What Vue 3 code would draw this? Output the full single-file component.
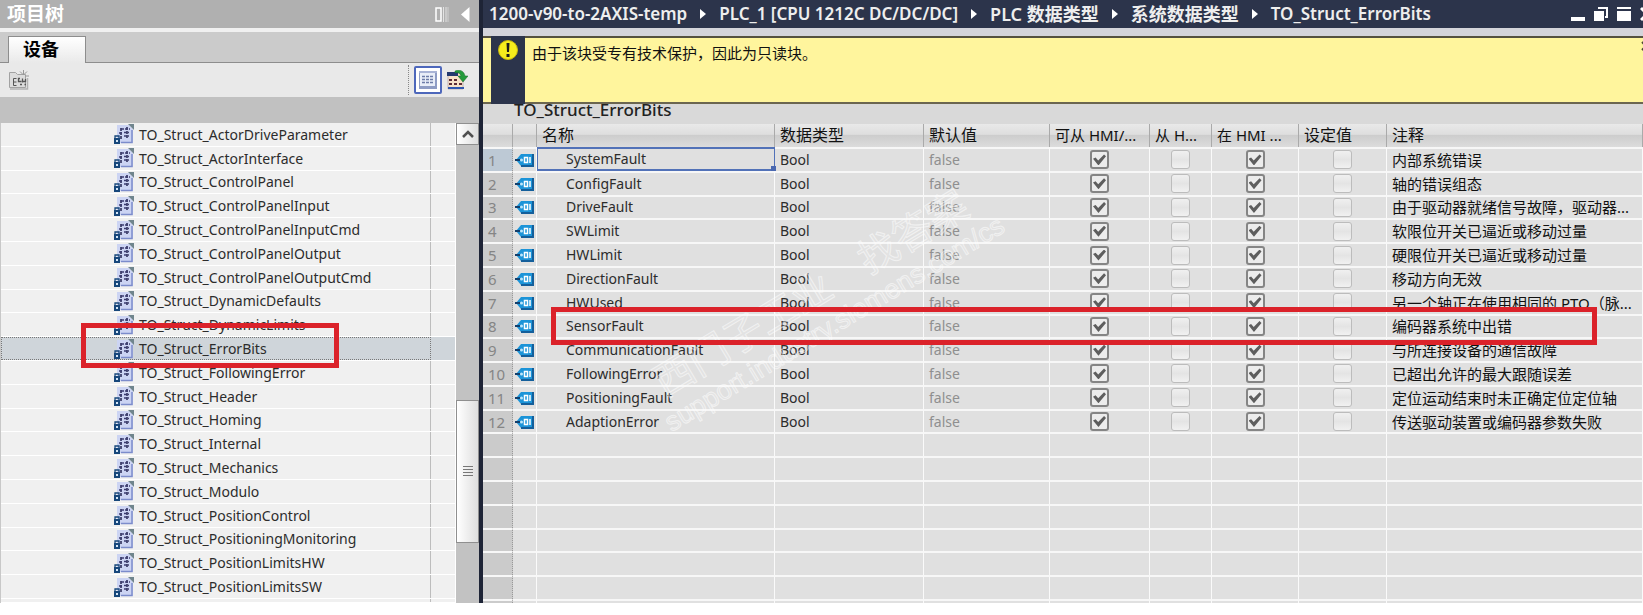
<template>
  <div class="app">
    <aside class="tree-panel">
      <header class="tree-title">
        <h2>项目树</h2>
        <button type="button" class="plain-btn" aria-label="自动折叠">
          <svg width="14" height="15" viewBox="0 0 14 15">
            <path d="M1 1h5v13h-5z" fill="none" stroke="#fff" stroke-width="1.5" />
            <path d="M8.5 0v15M11 0v15" stroke="#e4e4e4" stroke-width="1" />
            <path d="M13 0v15" stroke="#d0d0d0" stroke-width="1" />
          </svg>
        </button>
        <button type="button" class="plain-btn" aria-label="折叠">
          <svg width="9" height="15" viewBox="0 0 9 15"><path d="M8.5 0v15L0 7.5z" fill="#fff" /></svg>
        </button>
      </header>

      <div class="tabs">
        <button type="button" class="tab">设备</button>
      </div>

      <div class="toolbar">
        <button type="button" class="plain-btn" aria-label="新建">
          <svg width="21" height="20" viewBox="0 0 21 20">
            <path d="M1.5 2.5h6l2 2h8v13h-16z" fill="#dcdcdc" stroke="#a2a2a2" />
            <path d="M2 19h17.500V8" fill="none" stroke="#b2b2b2" stroke-width="1.5" />
            <path d="M8.500 8.500h-3v7h3M5.500 12h3" fill="none" stroke="#555" />
            <path d="M12 8.500h-1.500v3h3M14.500 8.500v4M12 14.500h2M17.500 9v3M15 11.500h3M16.500 14.500h1.500" fill="none" stroke="#555" stroke-width="1.300" />
            <path d="M15.500 0v5M12 1.500l3 3M19 1.500l-3 3M17 6h4" stroke="#999" />
          </svg>
        </button>
        <span class="spacer"></span>
        <span class="divider"></span>
        <button type="button" class="view-btn" aria-label="详细视图">
          <svg width="18" height="18" viewBox="0 0 18 18">
            <path d="M0 0h18v18H0z" fill="#8e9cc4" />
            <path d="M1 2h15v13H1z" fill="#e9eef8" />
            <path d="M0 0h18v2H0z" fill="#a9b4d6" />
            <path d="M3 5.5h12M3 8.5h12M3 11.5h12" stroke="#6d7ca8" stroke-width="1.5" stroke-dasharray="3 1" />
          </svg>
        </button>
        <button type="button" class="plain-btn" aria-label="打开视图">
          <svg width="21" height="20" viewBox="0 0 21 20">
            <path d="M1 3h15v16H1z" fill="#f8e2c8" stroke="#c3b3b3" />
            <path d="M0 2h11v4H0z" fill="#24396f" />
            <path d="M2 9h3v2H2zM7 9h3v2H7zM2 13h3v2H2zM7 13h3v2H7zM12 13h3v2h-3z" fill="#5c2b35" />
            <path d="M1 18h16" stroke="#2f57b0" stroke-width="2" />
            <path d="M8 1c5-2 9 0 10 5h3l-5 6-5-6h3c-1-3-3-4-6-3z" fill="#239a3b" stroke="#17692a" stroke-width=".5" />
          </svg>
        </button>
      </div>

      <div class="tree-head"></div>

      <div class="tree-body">
        <ul class="tree-list">
          <li v-for="item in treeItems" :key="item" :class="{ selected: item === selectedItem }">
            <span class="tree-cell">
              <svg class="type-icon" width="20" height="20" viewBox="0 0 20 20">
                <path d="M3 1h12l4 4v14H3z" fill="#ccd4f3" />
                <path d="M7 18.5h11V6" fill="none" stroke="#7c8ccb" stroke-width="1.5" />
                <path d="M14 0h6v6z" fill="#70858d" />
                <path d="M7 4v11M13 3v11" fill="none" stroke="#242452" stroke-width="1.5" stroke-dasharray="3 1" />
                <path d="M7 5h9M5 9h4M10 8.500h5M10 12h5" fill="none" stroke="#3c3c70" stroke-width="1.500" stroke-dasharray="3 1" />
                <path d="M0 14h6v6H0z" fill="#17477b" />
                <path d="M1 14v-2h4v2" fill="none" stroke="#17477b" stroke-width="1.3" />
                <path d="M2 16h2v2H2z" fill="#d5e6f7" />
              </svg>
              {{ item }}
            </span>
            <span v-if="item === selectedItem" class="mark tree-mark"></span>
          </li>
          <li class="cut-row"><span class="tree-cell"></span></li>
        </ul>
        <div class="scrollbar">
          <button type="button" class="scroll-up" aria-label="向上滚动">
            <svg width="12" height="8" viewBox="0 0 12 8"><path d="M1 7l5-5 5 5" fill="none" stroke="#505050" stroke-width="2.5" /></svg>
          </button>
          <div class="thumb">
            <svg width="10" height="10" viewBox="0 0 10 10"><path d="M0 .5h10M0 3.5h10M0 6.5h10M0 9.5h10" stroke="#777" /></svg>
          </div>
        </div>
      </div>
    </aside>

    <main class="editor">
      <header class="editor-title">
        <nav class="breadcrumb">
          <template v-for="(part, index) in path" :key="part.text">
            <svg v-if="index > 0" width="6" height="10" viewBox="0 0 6 10"><path d="M0 0l6 5-6 5z" fill="#fff" /></svg>
            <span :class="{ folder: part.folder }">{{ part.text }}</span>
          </template>
        </nav>
        <div class="window-btns">
          <button type="button" class="plain-btn" aria-label="最小化">
            <svg width="14" height="14" viewBox="0 0 14 14"><path d="M0 10h14v4H0z" fill="#fff" /></svg>
          </button>
          <button type="button" class="plain-btn" aria-label="还原">
            <svg width="14" height="14" viewBox="0 0 14 14">
              <path d="M0 4h10v10H0z" fill="#fff" />
              <path d="M4 1h9v9h-2" fill="none" stroke="#fff" stroke-width="2" />
            </svg>
          </button>
          <button type="button" class="plain-btn" aria-label="最大化">
            <svg width="14" height="14" viewBox="0 0 14 14"><path d="M0 0h14v2H0zM0 4h14v10H0z" fill="#fff" /></svg>
          </button>
          <button type="button" class="plain-btn" aria-label="关闭">
            <svg width="14" height="14" viewBox="0 0 14 14"><path d="M1 1l12 12M13 1L1 13" stroke="#fff" stroke-width="3" /></svg>
          </button>
        </div>
      </header>

      <div class="notice">
        <div class="notice-icon">
          <svg width="20" height="20" viewBox="0 0 20 20">
            <circle cx="10" cy="10" r="9.5" fill="#f6ec1c" stroke="#c9b90c" />
            <path d="M8.5 3h3l-.5 9H9zM8.5 14h3v3h-3z" fill="#1c1c1c" />
          </svg>
        </div>
        <p>由于该块受专有技术保护，因此为只读块。</p>
        <button type="button" class="plain-btn notice-close" aria-label="关闭提示">
          <svg width="10" height="10" viewBox="0 0 10 10"><path d="M1 1l8 8M9 1L1 9" fill="none" stroke="#4a4630" stroke-width="2" /></svg>
        </button>
      </div>

      <h1 class="block-name">TO_Struct_ErrorBits</h1>

      <table class="grid">
        <thead>
          <tr>
            <th v-for="(column, index) in columns" :key="index">{{ column }}</th>
          </tr>
        </thead>
        <tbody>
          <tr v-for="(row, index) in rows" :key="row.name" :class="{ active: index === 0 }">
            <td class="num">{{ index + 1 }}</td>
            <td class="tag">
              <svg width="20" height="14" viewBox="0 0 20 14">
                <path d="M7 1h12v12H7L2 7z" fill="#1c94d8" />
                <path d="M19 1v12H7" fill="none" stroke="#145f9b" stroke-width="2" />
                <path d="M1 7h5" stroke="#123f6c" stroke-width="2" />
                <circle cx="7.5" cy="7" r="1.5" fill="#bfe6fa" />
                <path d="M10.5 4.5h3v5h-3zM16 4v6" fill="none" stroke="#fff" stroke-width="1.5" />
              </svg>
            </td>
            <td class="name">{{ row.name }}</td>
            <td>Bool</td>
            <td class="default">false</td>
            <td class="check"><input type="checkbox" checked :aria-label="row.name + ' 可从 HMI 访问'" /></td>
            <td class="check"><input type="checkbox" :aria-label="row.name + ' 从 HMI 可写'" /></td>
            <td class="check"><input type="checkbox" checked :aria-label="row.name + ' 在 HMI 可见'" /></td>
            <td class="check"><input type="checkbox" :aria-label="row.name + ' 设定值'" /></td>
            <td class="comment">
              {{ row.comment }}
              <span v-if="row.name === 'SensorFault'" class="mark row-mark"></span>
            </td>
          </tr>
          <tr v-for="n in 8" :key="n">
            <td v-for="(column, index) in columns" :key="index" :class="{ num: index === 0, tag: index === 1 }"></td>
          </tr>
        </tbody>
      </table>

      <div class="watermark">
        <div class="watermark-name"><span>西门子工业</span><span>找答案</span></div>
        <div class="watermark-url">support.industry.siemens.com/cs</div>
      </div>
    </main>
  </div>
</template>

<script setup>
const selectedItem = 'TO_Struct_ErrorBits'

const treeItems = [
  'TO_Struct_ActorDriveParameter',
  'TO_Struct_ActorInterface',
  'TO_Struct_ControlPanel',
  'TO_Struct_ControlPanelInput',
  'TO_Struct_ControlPanelInputCmd',
  'TO_Struct_ControlPanelOutput',
  'TO_Struct_ControlPanelOutputCmd',
  'TO_Struct_DynamicDefaults',
  'TO_Struct_DynamicLimits',
  'TO_Struct_ErrorBits',
  'TO_Struct_FollowingError',
  'TO_Struct_Header',
  'TO_Struct_Homing',
  'TO_Struct_Internal',
  'TO_Struct_Mechanics',
  'TO_Struct_Modulo',
  'TO_Struct_PositionControl',
  'TO_Struct_PositioningMonitoring',
  'TO_Struct_PositionLimitsHW',
  'TO_Struct_PositionLimitsSW'
]

const path = [
  { text: '1200-v90-to-2AXIS-temp' },
  { text: 'PLC_1 [CPU 1212C DC/DC/DC]' },
  { text: 'PLC 数据类型', folder: true },
  { text: '系统数据类型', folder: true },
  { text: 'TO_Struct_ErrorBits' }
]

const columns = ['', '', '名称', '数据类型', '默认值', '可从 HMI/...', '从 H...', '在 HMI ...', '设定值', '注释']

const rows = [
  { name: 'SystemFault', comment: '内部系统错误' },
  { name: 'ConfigFault', comment: '轴的错误组态' },
  { name: 'DriveFault', comment: '由于驱动器就绪信号故障，驱动器...' },
  { name: 'SWLimit', comment: '软限位开关已逼近或移动过量' },
  { name: 'HWLimit', comment: '硬限位开关已逼近或移动过量' },
  { name: 'DirectionFault', comment: '移动方向无效' },
  { name: 'HWUsed', comment: '另一个轴正在使用相同的 PTO（脉...' },
  { name: 'SensorFault', comment: '编码器系统中出错' },
  { name: 'CommunicationFault', comment: '与所连接设备的通信故障' },
  { name: 'FollowingError', comment: '已超出允许的最大跟随误差' },
  { name: 'PositioningFault', comment: '定位运动结束时未正确定位定位轴' },
  { name: 'AdaptionError', comment: '传送驱动装置或编码器参数失败' }
]
</script>

<style>
body {
  margin: 0;
  background: #fff;
}
</style>

<style scoped>
.app {
  display: grid;
  grid-template-columns: 479px minmax(0, 1fr);
  height: calc(100vh - 12px);
  overflow: hidden;
  font-family: 'Noto Sans', 'Noto Sans CJK SC', sans-serif;
  font-size: 14px;
  color: #2c2c2c;
}

.app * {
  box-sizing: border-box;
}

svg {
  display: block;
  flex: none;
}

button {
  font-family: inherit;
}

.plain-btn {
  padding: 0;
  border: 0;
  background: none;
}

.spacer {
  flex: 1;
}

/* project tree */
.tree-panel {
  display: flex;
  flex-direction: column;
  min-height: 0;
}

.tree-title {
  display: flex;
  align-items: center;
  gap: 12px;
  height: 28px;
  padding: 0 9px 0 7px;
  background: #b0b0b0;
}

.tree-title h2 {
  flex: 1;
  margin: 0;
  font-size: 19px;
  line-height: 26px;
  color: #fff;
}

.tabs {
  display: flex;
  align-items: flex-end;
  height: 35px;
  padding-left: 8px;
  border-top: 4px solid #f0f0f0;
  background: linear-gradient(#cbcbcb 30px, #8d8d8d 30px);
}

.tab {
  width: 78px;
  height: 27px;
  padding: 0 0 2px 14px;
  border: 1px solid #8d8d8d;
  border-bottom: 0;
  background: linear-gradient(#fff, #e9e9e9);
  font-size: 18px;
  font-weight: bold;
  line-height: 24px;
  text-align: left;
  color: #000;
}

.toolbar {
  display: flex;
  align-items: center;
  gap: 5px;
  height: 34px;
  padding: 0 11px 0 8px;
  background: #e9e9e9;
}

.divider {
  height: 30px;
  border-left: 1px dotted #888;
}

.view-btn {
  display: flex;
  align-items: center;
  justify-content: center;
  width: 28px;
  height: 28px;
  padding: 0;
  border: 2px solid #4d67bb;
  border-radius: 2px;
  background: #fff;
}

.tree-head {
  height: 26px;
  background: #c1c1c1;
}

.tree-body {
  display: flex;
  flex: 1;
  min-height: 0;
}

.tree-list {
  display: grid;
  grid-template-rows: repeat(20, minmax(0, 1fr)) 4px;
  flex: 1;
  margin: 0;
  padding: 0;
  border-left: 1px solid #c8c8c8;
  list-style: none;
}

.tree-list li {
  position: relative;
  display: flex;
  padding-right: 24px;
  border-right: 1px solid #fff;
  border-bottom: 1px solid #fff;
  background: #f0f0f0;
}

.tree-cell {
  display: flex;
  flex: 1;
  align-items: center;
  gap: 5px;
  min-width: 0;
  padding-left: 113px;
  border-right: 1px solid #bdbdbd;
}

.tree-list li.selected {
  background: #cfd5da;
}

.selected .tree-cell {
  padding-left: 112px;
  border: 1px dotted #777;
}

.cut-row {
  overflow: hidden;
}

.mark {
  position: absolute;
  z-index: 2;
  border: 5px solid #db222a;
  pointer-events: none;
}

.tree-mark {
  top: -14px;
  left: 80px;
  width: 258px;
  height: 45px;
}

.scrollbar {
  display: grid;
  grid-template-rows: 22px 254fr 143fr 60fr;
  width: 23px;
  background: #c2c2c2;
}

.scroll-up,
.thumb {
  display: flex;
  align-items: center;
  justify-content: center;
  padding: 0;
  border: 1px solid #8f8f8f;
  background: linear-gradient(90deg, #fff, #dedede);
}

.thumb {
  grid-row: 3;
}

/* editor */
.editor {
  position: relative;
  display: flex;
  flex-direction: column;
  min-width: 0;
  min-height: 0;
  overflow: hidden;
  border-left: 4px solid #1e2436;
  background: #d9d9d9;
}

.editor-title {
  display: flex;
  align-items: center;
  justify-content: space-between;
  height: 28px;
  padding-left: 6px;
  background: #2c344b;
}

.breadcrumb {
  display: flex;
  align-items: center;
  gap: 13px;
  font-size: 17px;
  font-weight: 600;
  line-height: 28px;
  white-space: nowrap;
  color: #eee;
}

.breadcrumb .folder {
  font-size: 18px;
}

.window-btns {
  display: flex;
  gap: 9px;
  margin-right: -11px;
}

.notice {
  display: flex;
  height: 76px;
  padding-left: 8px;
  border-top: 8px solid #d4d4da;
  background: #fff59d;
  box-shadow: inset 0 2px #55513f, inset 0 -2px #6b6650;
}

.notice-icon {
  width: 34px;
  padding: 4px 7px;
  background: #2c344b;
}

.notice p {
  flex: 1;
  margin: 0;
  padding: 6px 7px;
  font-size: 15px;
  line-height: 22px;
  color: #111;
}

.notice-close {
  align-self: flex-start;
  margin: 5px -8px 0 0;
}

.block-name {
  height: 20px;
  margin: 0;
  padding-left: 31px;
  font-size: 17px;
  font-weight: 500;
  line-height: 12px;
  color: #222;
}

.grid {
  display: flex;
  flex: 1;
  flex-direction: column;
  min-height: 0;
}

.grid tr {
  position: relative;
  display: grid;
  grid-template-columns: 30px 24px 238px 149px 126px 100px 62px 87px 88px minmax(0, 1fr);
}

.grid th {
  height: 23px;
  padding: 0 5px;
  border-right: 1px solid #aaa;
  background: linear-gradient(#e9e9e9, #dedede 45%, #cdcdcd 50%, #dcdcdc);
  font-size: 16px;
  font-weight: normal;
  line-height: 23px;
  text-align: left;
  white-space: nowrap;
  color: #111;
}

.grid th:nth-child(n + 6):nth-child(-n + 8) {
  font-size: 15px;
}

.grid tbody {
  display: grid;
  grid-template-rows: repeat(19, minmax(0, 1fr)) 4px;
  flex: 1;
  min-height: 0;
  overflow: hidden;
}

.grid td {
  display: flex;
  align-items: center;
  min-width: 0;
  min-height: 0;
  padding: 0 5px;
  border-top: 2px solid #f7f7f7;
  border-right: 1px solid #fafafa;
  background: #e0e0e0;
  line-height: 20px;
  white-space: nowrap;
}

.grid td.num {
  border-right: 1px dotted #999;
  background: #cbcbcb;
  font-size: 15px;
  color: #858585;
}

.grid .active td.num {
  background: #bdc9d5;
}

.grid td.tag {
  padding: 0 1px;
}

.grid td.name {
  padding-left: 29px;
}

.grid .active td.name {
  position: relative;
  padding-left: 28px;
  border: 2px solid #5272b8;
  border-width: 2px 1px;
}

.active .name::after {
  content: '';
  position: absolute;
  right: -2px;
  bottom: -2px;
  width: 5px;
  height: 5px;
  background: #4a68b0;
}

.grid td.default {
  color: #8f8f8f;
}

.grid td.check {
  justify-content: center;
}

.grid td.comment {
  font-size: 15px;
  color: #111;
}

.check input {
  display: flex;
  align-items: center;
  justify-content: center;
  appearance: none;
  width: 19px;
  height: 19px;
  margin: 0;
  border: 1px solid #bcbcbc;
  border-radius: 3px;
  background: linear-gradient(#f0f0f0, #e4e4e4 50%, #f1f1f1);
}

.check input:checked {
  border: 2px solid #858585;
  background: #ececec;
}

.check input:checked::before {
  content: '';
  width: 13px;
  height: 11px;
  background: #5e5e5e;
  clip-path: polygon(0 40%, 20% 28%, 40% 55%, 85% 0, 100% 18%, 42% 100%);
}

.row-mark {
  top: -7px;
  right: 46px;
  left: 68px;
  height: 38px;
}

/* site watermark across the table */
.watermark {
  position: absolute;
  top: 265px;
  left: 144px;
  color: rgba(255, 255, 255, 0.12);
  -webkit-text-stroke: 1px rgba(255, 255, 255, 0.55);
  white-space: nowrap;
  transform: rotate(-31deg);
  pointer-events: none;
}

.watermark-name {
  display: flex;
  gap: 38px;
  padding-left: 12px;
  font-size: 40px;
  line-height: 46px;
}

.watermark-url {
  font-family: 'Liberation Sans', sans-serif;
  font-size: 27px;
  line-height: 32px;
}
</style>
